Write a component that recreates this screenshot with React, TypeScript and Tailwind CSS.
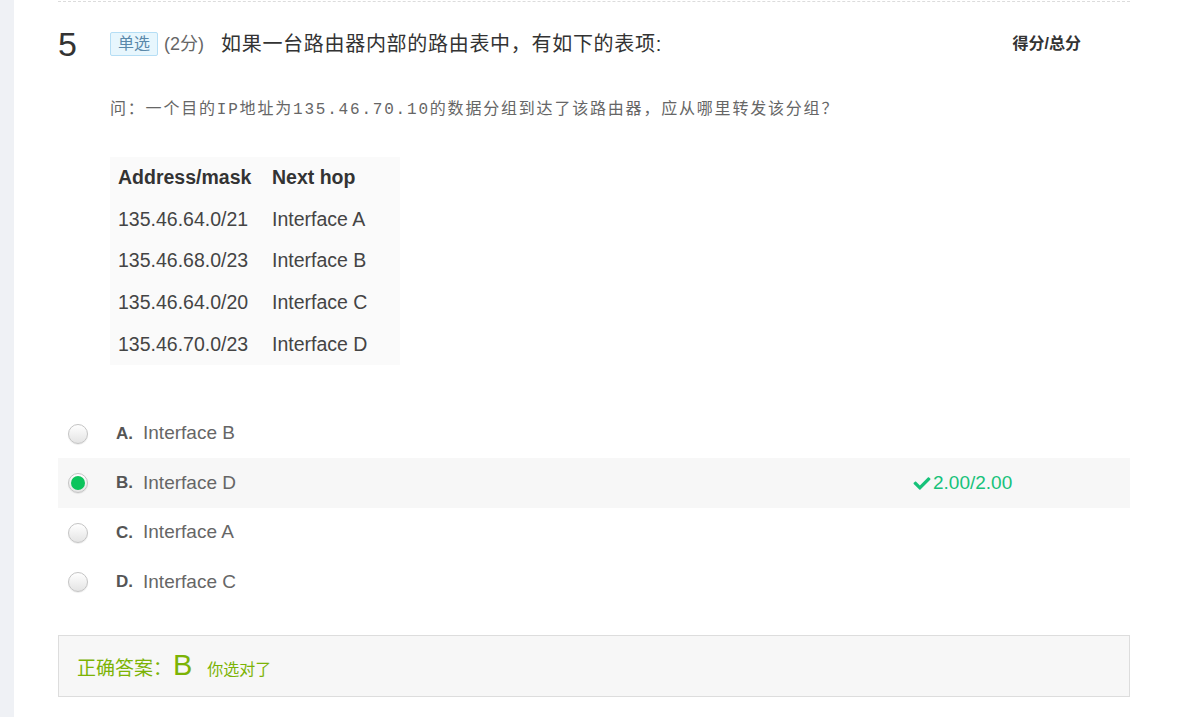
import { FaCheck } from "react-icons/fa";

const rows = [
  { addr: "135.46.64.0/21", hop: "Interface A" },
  { addr: "135.46.68.0/23", hop: "Interface B" },
  { addr: "135.46.64.0/20", hop: "Interface C" },
  { addr: "135.46.70.0/23", hop: "Interface D" },
];

const options = [
  { key: "A", text: "Interface B", checked: false },
  { key: "B", text: "Interface D", checked: true },
  { key: "C", text: "Interface A", checked: false },
  { key: "D", text: "Interface C", checked: false },
];

const sans = "font-['Liberation_Sans','Noto_Sans_CJK_SC',sans-serif]";

const Radio = ({ checked }: { checked: boolean }) => (
  <span className="flex h-[20px] w-[20px] shrink-0 items-center justify-center rounded-full border border-[#c4c4c4] bg-gradient-to-b from-[#ffffff] to-[#e4e4e4] shadow-[0_1px_1px_rgba(0,0,0,0.08)]">
    {checked && <span className="h-[14px] w-[14px] rounded-full bg-[#0cc45c]" />}
  </span>
);

const App = () => {
  return (
    <div className={`flex min-h-[717px] bg-white ${sans}`}>
      <div className="w-[14px] shrink-0 bg-[#eff1f5]" />

      <div className="pl-[44px]">
        <div className="mt-px w-[1072px] border-t border-dashed border-[#dcdcdc]">
          {/* header */}
          <div className="mt-[30px] flex h-[24px] items-center">
            <span className="w-[52px] text-[34px] leading-[24px] text-[#333]">5</span>
            <span className="flex h-[24px] items-center rounded-[2px] border border-[#b5def5] bg-[#e7f6fd] px-[7px] text-[16px] text-[#5a88aa]">
              单选
            </span>
            <span className="ml-[6px] text-[18px] text-[#666]">(2分)</span>
            <span className="ml-[17px] text-[20px] tracking-[0.7px] text-[#333]">如果一台路由器内部的路由表中，有如下的表项:</span>
            <span className="ml-auto mr-[49px] text-[16px] font-bold text-[#333]">得分/总分</span>
          </div>

          {/* question */}
          <div className="mt-[42px] pl-[52px] font-['Liberation_Mono','Noto_Sans_CJK_SC',monospace] text-[16px] leading-[24px] tracking-[1.8px] text-[#666]">
            问：一个目的IP地址为135.46.70.10的数据分组到达了该路由器，应从哪里转发该分组？
          </div>

          {/* table */}
          <div className="mt-[35px] pl-[52px]">
            <table className="border-collapse bg-[#fafafa] text-[19.5px] text-[#333]">
              <thead>
                <tr className="h-[41.6px]">
                  <th className="w-[154px] px-[8px] text-left font-bold">Address/mask</th>
                  <th className="w-[136px] px-[8px] text-left font-bold">Next hop</th>
                </tr>
              </thead>
              <tbody>
                {rows.map((r) => (
                  <tr key={r.addr} className="h-[41.6px]">
                    <td className="px-[8px] text-[#444]">{r.addr}</td>
                    <td className="px-[8px] text-[#444]">{r.hop}</td>
                  </tr>
                ))}
              </tbody>
            </table>
          </div>

          {/* options */}
          <div className="mt-[44px]">
            {options.map((o) => (
              <div
                key={o.key}
                className={`flex h-[49.5px] items-center pl-[10px] ${o.checked ? "bg-[#f7f7f7]" : ""}`}
              >
                <div className="flex w-[845px] items-center">
                  <Radio checked={o.checked} />
                  <span className="ml-[28px] text-[17px] font-bold text-[#555]">{o.key}.</span>
                  <span className="ml-[10px] text-[19px] text-[#666]">{o.text}</span>
                </div>
                {o.checked && (
                  <div className="flex items-center text-[19px] text-[#16c27a]">
                    <FaCheck className="h-[17px] w-[18px]" />
                    <span className="ml-[2px]">2.00/2.00</span>
                  </div>
                )}
              </div>
            ))}
          </div>

          {/* answer */}
          <div className="mt-[28px] flex h-[62px] items-baseline border border-[#dddddd] bg-[#f7f7f7] pl-[18px] pt-[15px] text-[#7cb305]">
            <span className="text-[19px]">正确答案：</span>
            <span className="ml-[1px] text-[29px] leading-none">B</span>
            <span className="ml-[15px] text-[16px]">你选对了</span>
          </div>
        </div>
      </div>
    </div>
  );
};

export default App;
